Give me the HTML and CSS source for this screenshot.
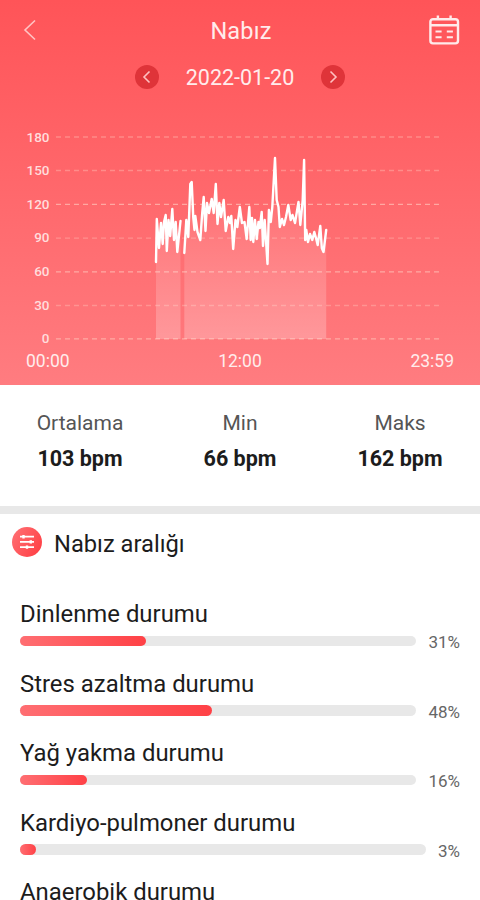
FILE: index.html
```
<!DOCTYPE html>
<html lang="tr">
<head>
    <meta charset="UTF-8">
    <meta name="viewport" content="width=device-width, initial-scale=1.0">
    <title>Nabız</title>
    <link rel="stylesheet" href="styles.css">
</head>
<body>
    <div class="top">
        <header class="header">
            <svg class="back" width="14" height="22" viewBox="0 0 14 22">
                <path d="M12 1.5 L2 11 L12 20.5"/>
            </svg>
            <h1>Nabız</h1>
            <svg class="calendar" width="32" height="32" viewBox="0 0 32 32">
                <rect x="2.4" y="5.2" width="27.6" height="24.2" rx="2.6"/>
                <path d="M2.6 11.2 H29.8 M9.9 1.4 V5 M22.6 1.4 V5"/>
                <path class="thin" d="M7.5 17.6 H13.6 M18.8 17.6 H24.9 M7.5 23.2 H13.6 M18.8 23.2 H24.9"/>
            </svg>
        </header>
        <div class="date-row">
            <span class="arrow">
                <svg width="10" height="14" viewBox="0 0 10 14"><path d="M7.5 1.5 L2 7 L7.5 12.5"/></svg>
            </span>
            <span class="date">2022-01-20</span>
            <span class="arrow">
                <svg width="10" height="14" viewBox="0 0 10 14"><path d="M2.5 1.5 L8 7 L2.5 12.5"/></svg>
            </span>
        </div>
        <svg class="chart" width="480" height="230" viewBox="0 120 480 230">
            <defs>
                <linearGradient id="fill" x1="0" y1="157" x2="0" y2="339" gradientUnits="userSpaceOnUse">
                    <stop offset="0" stop-color="#fff" stop-opacity="0"/>
                    <stop offset="1" stop-color="#fff" stop-opacity="0.24"/>
                </linearGradient>
            </defs>
            <g class="grid">
                <path d="M56 137 H440"/>
                <path d="M56 170.5 H440"/>
                <path class="strong" d="M56 204.4 H440"/>
                <path d="M56 238.2 H440"/>
                <path class="strong" d="M56 271.8 H440"/>
                <path d="M56 305.5 H440"/>
                <path class="strong" d="M56 338.8 H440"/>
            </g>
            <g class="y-labels">
                <text x="49.5" y="141.5">180</text>
                <text x="49.5" y="175.1">150</text>
                <text x="49.5" y="208.7">120</text>
                <text x="49.5" y="242.3">90</text>
                <text x="49.5" y="276">60</text>
                <text x="49.5" y="309.6">30</text>
                <text x="49.5" y="343.2">0</text>
            </g>
            <g id="series"></g>
        </svg>
        <div class="times">
            <span>00:00</span>
            <span>12:00</span>
            <span>23:59</span>
        </div>
    </div>

    <div class="stats">
        <div class="stat">
            <span>Ortalama</span>
            <strong>103 bpm</strong>
        </div>
        <div class="stat">
            <span>Min</span>
            <strong>66 bpm</strong>
        </div>
        <div class="stat">
            <span>Maks</span>
            <strong>162 bpm</strong>
        </div>
    </div>

    <div class="ranges">
        <div class="ranges-title">
            <svg width="30" height="30" viewBox="0 0 30 30">
                <defs>
                    <linearGradient id="badge" x1="0" y1="0" x2="1" y2="0.6">
                        <stop offset="0" stop-color="#ff7276"/>
                        <stop offset="1" stop-color="#ff4348"/>
                    </linearGradient>
                </defs>
                <circle cx="15" cy="15" r="15" fill="url(#badge)"/>
                <path class="sliders" d="M8 9.7 H22 M8 14.9 H22 M8 20.1 H22"/>
                <path class="knobs" d="M11.5 8 V11.4 M18.8 13.2 V16.6 M15 18.4 V21.8"/>
            </svg>
            <h2>Nabız aralığı</h2>
        </div>
        <div class="range">
            <p>Dinlenme durumu</p>
            <div class="range-row">
                <div class="bar"><div class="bar-fill" style="width: 31.7%"></div></div>
                <span>31%</span>
            </div>
        </div>
        <div class="range">
            <p>Stres azaltma durumu</p>
            <div class="range-row">
                <div class="bar"><div class="bar-fill" style="width: 48.5%"></div></div>
                <span>48%</span>
            </div>
        </div>
        <div class="range">
            <p>Yağ yakma durumu</p>
            <div class="range-row">
                <div class="bar"><div class="bar-fill" style="width: 16.9%"></div></div>
                <span>16%</span>
            </div>
        </div>
        <div class="range">
            <p>Kardiyo-pulmoner durumu</p>
            <div class="range-row">
                <div class="bar"><div class="bar-fill" style="width: 4%"></div></div>
                <span>3%</span>
            </div>
        </div>
        <div class="range">
            <p>Anaerobik durumu</p>
        </div>
    </div>

    <script>
        const series = document.getElementById('series');
        const baseline = 339;

        // two recordings with a short gap between them
        const segments = [
            '156,262 156.8,219 159,248 161,223 162.7,244 164,222 165.7,215 166.8,251 168.5,220 170.2,236 172.3,209 174,240 175.7,222 177.3,252 180.5,221',
            '184.3,253 186.3,220 188.3,237 190.3,184 191.7,182 193.3,218 194.5,230 195.3,216 197.5,232 200.3,240 202.2,213 203.7,197 205.5,231 207,203 209,213 211.7,199 213.7,213 215.8,184 217.5,224 219.3,203 221,217 223.7,200 225.7,231 228.3,217 230,223 231.3,216 233.2,249 235.5,220 237.3,227 239.8,207 242,223 244.5,222 246.7,239 249.3,207 250.7,240 252,218 253.3,242 255,220 256.7,239 258.5,222 259.8,228 261.7,212 263,246 264.7,220 267.5,264 268.9,210 270.8,222 272.3,207 275,158 276.7,200 278.5,207 279.8,227 282,219 284,225 286,217 288.3,205 290.7,220 292.5,215 295,223 298.5,202 300.3,225 302.7,200 304.1,160 305.2,240 306.3,230 308,242 310,234 312.3,240 314.3,232 316,238 317.7,245 320.3,226 321.8,248 323.5,252 326.2,230'
        ];

        function draw(tag, className, points) {
            const el = document.createElementNS('http://www.w3.org/2000/svg', tag);
            el.setAttribute('class', className);
            el.setAttribute('points', points);
            series.appendChild(el);
        }

        segments.forEach(points => {
            const list = points.split(' ');
            const first = list[0].split(',')[0];
            const last = list[list.length - 1].split(',')[0];
            draw('polygon', 'area', `${first},${baseline} ${points} ${last},${baseline}`);
            draw('polyline', 'line', points);
        });
    </script>
</body>
</html>
```
FILE: styles.css
```
* {
    box-sizing: border-box;
}

body {
    margin: 0;
    height: 900px;
    overflow: hidden;
    font-family: Roboto, sans-serif;
    background-color: #fff;
    color: #1c1c1c;
}

h1, h2, p {
    margin: 0;
    font-weight: 400;
}

svg {
    display: block;
    flex: none;
    fill: none;
}

.top {
    height: 385px;
    background: linear-gradient(#ff5458, #ff7c80);
    color: #ffecec;
}

.header {
    display: flex;
    align-items: center;
    justify-content: space-between;
    height: 60px;
    padding: 0 20px 0 23px;
}

.header h1 {
    font-size: 23.5px;
    letter-spacing: 0.2px;
    padding: 1px 0 0 17px;
}

.back {
    stroke: #ffc4c4;
    stroke-width: 1.6;
}

.calendar {
    stroke: #ffeaea;
    stroke-width: 2.4;
}

.calendar .thin {
    stroke-width: 2;
}

.date-row {
    display: flex;
    align-items: center;
    justify-content: center;
    height: 34px;
    gap: 27px;
}

.date {
    font-size: 21.5px;
    line-height: 34px;
    padding-top: 1px;
}

.arrow {
    display: flex;
    align-items: center;
    justify-content: center;
    width: 24px;
    height: 24px;
    border-radius: 50%;
    background-color: #df3439;
    stroke: #ffc0c0;
    stroke-width: 1.6;
}

.chart {
    margin-top: 26px;
}

.grid {
    stroke: #ffb4ac;
    stroke-opacity: 0.5;
    stroke-width: 1.3;
    stroke-dasharray: 5 4;
}

.grid .strong {
    stroke-opacity: 0.85;
}

.y-labels {
    font-size: 13.5px;
    font-weight: 500;
    fill: #ffdcdc;
    text-anchor: end;
}

.area {
    fill: url(#fill);
}

.line {
    fill: none;
    stroke: #fff;
    stroke-width: 2.4;
    stroke-linejoin: round;
    stroke-linecap: round;
}

.times {
    display: flex;
    justify-content: space-between;
    padding: 0 26px;
    font-size: 17.5px;
    line-height: 23px;
}

.stats {
    display: grid;
    grid-template-columns: repeat(3, 1fr);
    height: 129px;
    padding-top: 24px;
    border-bottom: 8px solid #e8e8e8;
    text-align: center;
}

.stat span, .stat strong {
    display: block;
}

.stat span {
    font-size: 21px;
    line-height: 29px;
    color: #555;
}

.stat strong {
    margin-top: 7px;
    font-size: 21.5px;
    line-height: 28px;
    font-weight: 700;
}

.ranges {
    padding: 13px 20px 0;
}

.ranges-title {
    display: flex;
    align-items: center;
    height: 30px;
    gap: 12px;
    margin: 0 0 41px -8px;
}

.ranges-title h2 {
    font-size: 23.7px;
    padding-top: 3px;
}

.sliders {
    stroke: #fff;
    stroke-width: 1.8;
}

.knobs {
    stroke: #fff;
    stroke-width: 2.4;
}

.range {
    height: 69.5px;
}

.range p {
    font-size: 23.9px;
    line-height: 32px;
}

.range-row {
    display: flex;
    align-items: center;
    height: 20px;
    gap: 12px;
    margin-top: 1px;
}

.range-row span {
    font-size: 17px;
    line-height: 20px;
    color: #666;
    padding-top: 2px;
}

.bar {
    flex: 1;
    height: 10.5px;
    border-radius: 6px;
    background-color: #e8e8e8;
}

.bar-fill {
    height: 100%;
    border-radius: 6px;
    background: linear-gradient(90deg, #ff6e72, #ff4146);
}
```
